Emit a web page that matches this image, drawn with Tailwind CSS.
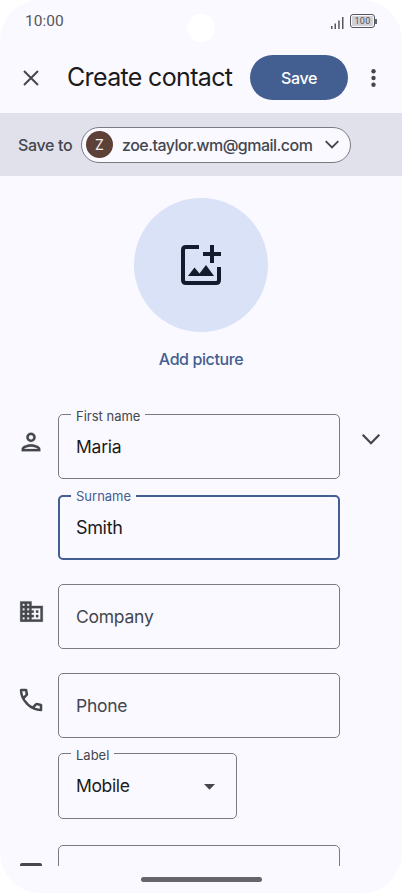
<!DOCTYPE html>
<html lang="en">
<head>
<meta charset="utf-8">
<meta name="viewport" content="width=device-width, initial-scale=1">
<title>Create contact</title>
<script src="https://cdn.jsdelivr.net/npm/@tailwindcss/browser@4"></script>
</head>
<body class="bg-white">
<div class="relative flex h-[893px] w-[402px] flex-col overflow-hidden rounded-[40px] bg-[#faf9ff] font-['Inter',sans-serif] text-[#44474e]">
  <header class="relative flex h-[42px] shrink-0 items-center justify-between pl-[25px] pr-[25px]">
    <span class="pt-[2px] font-['Roboto',sans-serif] text-[15.5px] leading-none text-[#55565b]">10:00</span>
    <div class="absolute left-[186.500px] top-[13.500px] size-[28px] rounded-full bg-white"></div>
    <div class="flex items-center gap-[6px]">
      <svg class="mt-[2px] h-[13px] w-[13px]" viewBox="0 0 13 13" fill="#55565b"><path d="M0 10h1.500v3H0zM3.500 7.500H5V13H3.500zM7.200 4.500h1.500V13H7.200zM11 1h1.500v12H11z"/></svg>
      <div class="flex items-center">
        <div class="flex h-[14px] w-[25px] items-center justify-center rounded-[3px] border border-[#55565b] p-px"><span class="flex h-full w-full items-center justify-center rounded-[1px] bg-[#d0d0d5] font-['Roboto',sans-serif] text-[9px] leading-none tracking-[0.2px] text-[#55565b]">100</span></div>
        <div class="h-[5px] w-[2px] bg-[#66676c]"></div>
      </div>
    </div>
  </header>

  <div class="flex h-[71px] shrink-0 items-center pl-[23px]">
    <svg class="size-4" viewBox="0 0 16 16" fill="none" stroke="#44474e" stroke-width="2"><path d="M1 1l14 14M15 1L1 15"/></svg>
    <h1 class="ml-[28px] w-[183px] whitespace-nowrap text-[25px] leading-none tracking-[-0.65px] text-[#1a1b20]">Create contact</h1>
    <button class="h-[45px] w-[98px] rounded-full bg-[#435e91] text-[16px] font-medium leading-none tracking-[-0.4px] text-white">Save</button>
    <svg class="ml-[22.500px] h-[18px] w-[5px]" viewBox="0 0 5 18" fill="#44474e"><circle cx="2.500" cy="2.300" r="2.200"/><circle cx="2.500" cy="9" r="2.200"/><circle cx="2.500" cy="15.700" r="2.200"/></svg>
  </div>

  <div class="flex h-[63px] shrink-0 items-center bg-[#e1e1eb] pl-[18px]">
    <span class="w-[63px] whitespace-nowrap text-[16px] font-medium leading-none tracking-[-0.35px]">Save to</span>
    <div class="flex h-[36px] w-[270px] items-center rounded-full border border-[#797a82] bg-[#faf9ff] pl-[4px]">
      <span class="flex size-[27px] items-center justify-center rounded-full bg-[#5d4037] text-[14px] leading-none text-[#f4efed]">Z</span>
      <span class="ml-[9px] w-[203px] whitespace-nowrap text-[16px] font-medium leading-none tracking-[-0.52px]">zoe.taylor.wm@gmail.com</span>
      <svg class="h-[9px] w-[14px]" viewBox="0 0 14 9" fill="none" stroke="#44474e" stroke-width="1.900"><path d="M.7 1.200L7 7.500l6.300-6.300"/></svg>
    </div>
  </div>

  <div class="flex h-[230px] shrink-0 flex-col items-center pt-[22px]">
    <div class="flex size-[134px] items-center justify-center rounded-full bg-[#dae2f7]">
      <svg class="size-10" viewBox="0 0 40 40" fill="none" stroke="#131c2c" stroke-width="4"><path d="M18 2H5Q2 2 2 5v30q0 3 3 3h30q3 0 3-3V22M31 0v18M22 9h18"/><path d="M7 31l6.500-8.500 5 6L25 20l8 11z" fill="#131c2c" stroke="none"/></svg>
    </div>
    <span class="mt-[19px] whitespace-nowrap text-[16px] font-medium leading-none tracking-[-0.4px] text-[#435e91]">Add picture</span>
  </div>

  <main class="h-[460px] shrink-0 overflow-hidden pt-[8px]">
    <div class="flex h-[81px] items-start">
      <svg class="ml-[17px] mt-[13.500px] size-[28px] shrink-0" viewBox="0 0 24 24" fill="#44474e" stroke="#44474e" stroke-width=".2"><path d="M12 12c2.210 0 4-1.790 4-4s-1.790-4-4-4-4 1.790-4 4 1.790 4 4 4zm0-6a2 2 0 110 4 2 2 0 010-4zM12 14c-2.670 0-8 1.340-8 4v2h16v-2c0-2.660-5.330-4-8-4zm-6 4c.2-.71 3.300-2 6-2s5.800 1.290 6 2H6z"/></svg>
      <div class="relative ml-[13px] flex h-[65px] w-[281.500px] items-center rounded-[5px] border border-[#797a82] pl-[17px]">
        <span class="absolute left-[12px] top-[-5px] bg-[#faf9ff] px-[5px] text-[13px] leading-none">First name</span>
        <span class="text-[17.500px] leading-none tracking-[-0.25px] text-[#1a1b20]">Maria</span>
      </div>
      <svg class="ml-[21px] mt-[19px] h-[13px] w-[20px]" viewBox="0 0 20 13" fill="none" stroke="#44474e" stroke-width="2.300"><path d="M1.700 1.800L10 10.200l8.300-8.400"/></svg>
    </div>
    <div class="flex h-[89px] items-start pl-[58px]">
      <div class="relative flex h-[65px] w-[281.500px] items-center rounded-[5px] border-2 border-[#435e91] pl-[16px]">
        <span class="absolute left-[11px] top-[-7px] bg-[#faf9ff] px-[5px] text-[13px] leading-none text-[#435e91]">Surname</span>
        <span class="text-[18px] leading-none tracking-[-0.35px] text-[#1a1b20]">Smith</span>
      </div>
    </div>
    <div class="flex h-[89px] items-start">
      <svg class="ml-[18px] mt-[13.500px] size-[27px] shrink-0" viewBox="0 0 24 24" fill="#44474e" stroke="#44474e" stroke-width=".3"><path d="M12 7V3H2v18h20V7H12zM6 19H4v-2h2v2zm0-4H4v-2h2v2zm0-4H4V9h2v2zm0-4H4V5h2v2zm4 12H8v-2h2v2zm0-4H8v-2h2v2zm0-4H8V9h2v2zm0-4H8V5h2v2zm10 12h-8v-2h2v-2h-2v-2h2v-2h-2V9h8v10zm-2-8h-2v2h2v-2zm0 4h-2v2h2v-2z"/></svg>
      <div class="ml-[13px] flex h-[65px] w-[281.500px] items-center rounded-[5px] border border-[#797a82] pl-[17px]"><span class="text-[17.500px] leading-none tracking-[-0.25px]">Company</span></div>
    </div>
    <div class="flex h-[80px] items-start">
      <svg class="ml-[16px] mt-[12px] size-[30px] shrink-0" viewBox="0 0 24 24" fill="#44474e"><path d="M19.950 21q-3.125 0-6.175-1.363t-5.550-3.862-3.863-5.550T3 4.050q0-.45.3-.75t.75-.3H8.100q.35 0 .625.238t.325.562l.65 3.500q.05.400-.025.675T9.400 8.450L6.975 10.900q.5.925 1.188 1.788t1.512 1.662q.775.775 1.625 1.438T13.100 17l2.350-2.350q.225-.225.588-.338t.712-.062l3.450.7q.35.100.575.363T21 15.900v4.050q0 .45-.3.750t-.75.300M6.025 9l1.650-1.650L7.250 5H5.025q.125 1.025.35 2.025T6.025 9m8.950 8.950q.975.425 1.988.675T19 18.950v-2.200l-2.350-.475z"/></svg>
      <div class="ml-[12px] flex h-[65px] w-[281.500px] items-center rounded-[5px] border border-[#797a82] pl-[17px]"><span class="text-[17.500px] leading-none tracking-[-0.25px]">Phone</span></div>
    </div>
    <div class="flex h-[92px] items-start pl-[58px]">
      <div class="relative flex h-[66px] w-[179px] items-center justify-between rounded-[5px] border border-[#797a82] pl-[17px] pr-[21px]">
        <span class="absolute left-[12px] top-[-5px] bg-[#faf9ff] px-[5px] text-[13px] leading-none">Label</span>
        <span class="text-[17.500px] leading-none tracking-[-0.35px] text-[#1a1b20]">Mobile</span>
        <svg class="mt-px h-[6px] w-[11px]" viewBox="0 0 11 6" fill="#44474e"><path d="M0 0h11L5.500 5.800z"/></svg>
      </div>
    </div>
    <div class="flex items-start">
      <div class="ml-[20px] mt-[18px] h-[18px] w-[22px] rounded-[2px] border-[3px] border-[#44474e]"></div>
      <div class="ml-[16px] h-[66px] w-[281.500px] rounded-[5px] border border-[#797a82]"></div>
    </div>
  </main>

  <footer class="flex flex-1 justify-center pt-[11px]">
    <div class="h-[5px] w-[121px] rounded-full bg-[#65656a]"></div>
  </footer>
</div>
</body>
</html>
